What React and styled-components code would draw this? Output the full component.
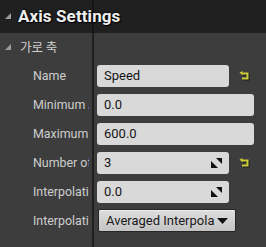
import React from "react";
import styled, { createGlobalStyle } from "styled-components";

const GlobalStyle = createGlobalStyle`
  html, body { margin: 0; padding: 0; background: #3d3d3d; }
  body { font-family: Roboto, "Liberation Sans", sans-serif; }
`;

const splitLine = (c) =>
  `linear-gradient(to right, transparent 92px, ${c} 92px, ${c} 94px, transparent 94px)`;

const Panel = styled.div`
  width: 266px;
  height: 247px;
  overflow: hidden;
  background: ${splitLine("#1f1f1f")}, #3d3d3d;
  display: flex;
  flex-direction: column;
`;

const Header = styled.div`
  height: 33px;
  flex: none;
  display: flex;
  align-items: center;
  gap: 7px;
  padding: 0 0 2px 5px;
  box-sizing: border-box;
  background: ${splitLine("#151515")}, #202020;
`;

const HeaderTitle = styled.span`
  font-family: Roboto, "Liberation Sans", sans-serif;
  font-weight: 700;
  font-size: 17px;
  color: #efefef;
  text-shadow: 1px 1px 1px #000, 0 0 2px #000;
  letter-spacing: 0.1px;
`;

const Category = styled.div`
  height: 28px;
  flex: none;
  display: flex;
  align-items: center;
  gap: 9px;
  padding: 0 0 1px 5px;
  box-sizing: border-box;
`;

const CategoryTitle = styled.span`
  font-family: "Noto Sans CJK KR", Roboto, sans-serif;
  font-size: 12.5px;
  color: #cfcfcf;
`;

const Row = styled.div`
  height: 29px;
  flex: none;
  display: grid;
  grid-template-columns: 89px 1fr;
  align-items: center;
`;

const Label = styled.div`
  padding-left: 33px;
  overflow: hidden;
  white-space: nowrap;
  font-size: 12.4px;
  color: #cdcdcd;
`;

const ValueCell = styled.div`
  display: flex;
  align-items: center;
  gap: 10px;
  padding-left: ${(p) => 8 + (p.$shift || 0)}px;
`;

const Box = styled.div`
  width: ${(p) => p.$w}px;
  height: 22px;
  box-sizing: border-box;
  border-radius: 3px;
  background: #d9d9d9;
  display: flex;
  align-items: center;
  justify-content: space-between;
  padding: 0 7px 0 7px;
  font-size: 13px;
  color: #151515;
`;

const Dropdown = styled.div`
  width: 138px;
  height: 23px;
  box-sizing: border-box;
  border-radius: 2px;
  border: 1px solid #262626;
  box-shadow: inset 0 1px 0 #efefef;
  background: linear-gradient(to bottom, #dedede, #c4c4c4);
  display: flex;
  align-items: center;
  justify-content: space-between;
  padding: 0 7px 0 7px;
  font-size: 13px;
  color: #1a1a1a;
  white-space: nowrap;
`;

const Tri = () => (
  <svg width="6" height="6" viewBox="0 0 6 6">
    <polygon points="6,0 6,6 0,6" fill="#9c9c9c" />
  </svg>
);

const ResetIcon = () => (
  <svg width="11" height="10" viewBox="0 0 11 10" style={{ filter: "drop-shadow(1px 1px 0 #1a1a1a)" }}>
    <path d="M3 2.5 H8.5 V7.5 H3" fill="none" stroke="#cccc3a" strokeWidth="2" />
    <polygon points="0.5,1.5 3.5,0 3.5,4.5" fill="#cccc3a" />
  </svg>
);

const SpinIcon = () => (
  <svg width="11" height="10" viewBox="0 0 11 10">
    <polygon points="5,0 11,0 11,6" fill="#111" />
    <polygon points="0,3 0,10 7,10" fill="#111" />
  </svg>
);

const Caret = () => (
  <svg width="11" height="6" viewBox="0 0 11 6">
    <polygon points="0,0 11,0 5.5,6" fill="#111" />
  </svg>
);

const rows = [
  { label: "Name", value: "Speed", w: 132, reset: true },
  { label: "Minimum Axis Value", value: "0.0", w: 157 },
  { label: "Maximum Axis Value", value: "600.0", w: 157 },
  { label: "Number of Grid Divisions", value: "3", w: 132, spin: true, reset: true },
  { label: "Interpolation Time", value: "0.0", w: 132, spin: true },
];

export default function App() {
  return (
    <>
      <GlobalStyle />
      <Panel>
        <Header>
          <Tri />
          <HeaderTitle>Axis Settings</HeaderTitle>
        </Header>
        <Category>
          <Tri />
          <CategoryTitle>가로 축</CategoryTitle>
        </Category>
        {rows.map((r) => (
          <Row key={r.label}>
            <Label>{r.label}</Label>
            <ValueCell>
              <Box $w={r.w}>
                <span>{r.value}</span>
                {r.spin && <SpinIcon />}
              </Box>
              {r.reset && <ResetIcon />}
            </ValueCell>
          </Row>
        ))}
        <Row>
          <Label>Interpolation Method</Label>
          <ValueCell $shift={1}>
            <Dropdown>
              <span>Averaged Interpola</span>
              <Caret />
            </Dropdown>
          </ValueCell>
        </Row>
      </Panel>
    </>
  );
}
